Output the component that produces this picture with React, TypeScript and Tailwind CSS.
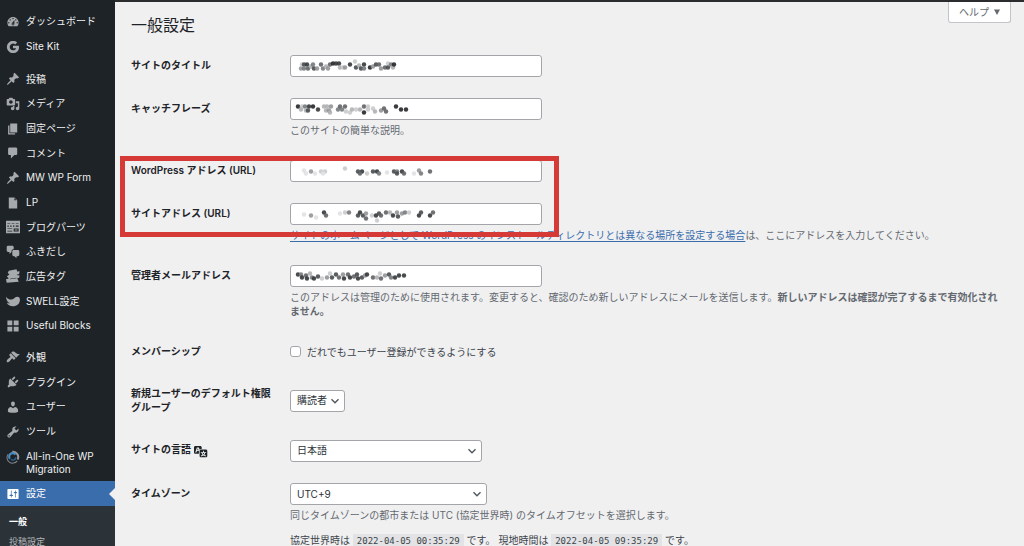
import type { ReactNode } from "react";

const ICONS: Record<string, string> = {
  dashboard:
    "M3.76 16h12.48c1.1-1.37 1.76-3.11 1.76-5 0-4.42-3.58-8-8-8s-8 3.58-8 8c0 1.89.66 3.63 1.76 5zM10 4c.55 0 1 .45 1 1s-.45 1-1 1-1-.45-1-1 .45-1 1-1zM6 6c.55 0 1 .45 1 1s-.45 1-1 1-1-.45-1-1 .45-1 1-1zm8 0c.55 0 1 .45 1 1s-.45 1-1 1-1-.45-1-1 .45-1 1-1zm-5.37 5.55L12 7v6c0 1.1-.9 2-2 2s-2-.9-2-2c0-.57.24-1.08.63-1.45zM4 10c.55 0 1 .45 1 1s-.45 1-1 1-1-.45-1-1 .45-1 1-1zm12 0c.55 0 1 .45 1 1s-.45 1-1 1-1-.45-1-1 .45-1 1-1zm-5 3c0-.55-.45-1-1-1s-1 .45-1 1 .45 1 1 1 1-.45 1-1z",
  google:
    "M18.4 8.3H10v3.6h4.500c-.5 1.800-2.200 2.900-4.400 2.900a4.800 4.800 0 1 1 3.100-8.500l2.700-2.700A8.700 8.700 0 1 0 10.100 18.700c4.900 0 8.500-3.400 8.500-8.500 0-.7-.1-1.300-.2-1.900z",
  pin: "M10.44 3.02l1.82-1.82 6.36 6.35-1.83 1.82c-1.05-.68-2.48-.57-3.41.36l-.75.75c-.92.93-1.04 2.35-.35 3.41l-1.83 1.82-2.41-2.41-2.8 2.79c-.42.42-3.38 2.71-3.8 2.29s1.86-3.39 2.28-3.81l2.79-2.79L4.1 9.36l1.83-1.82c1.05.69 2.48.57 3.4-.36l.75-.75c.93-.92 1.05-2.35.36-3.41z",
  media:
    "M13 11V4c0-.55-.45-1-1-1h-1.67L9 1H5L3.67 3H2c-.55 0-1 .45-1 1v7c0 .55.45 1 1 1h10c.55 0 1-.45 1-1zM7 4.5c1.38 0 2.5 1.12 2.5 2.5S8.38 9.5 7 9.5 4.5 8.38 4.5 7 5.62 4.5 7 4.5zM14 6h5v10.5c0 1.38-1.12 2.5-2.5 2.5S14 17.88 14 16.5s1.12-2.5 2.5-2.5c.17 0 .34.02.5.05V9h-3V6zm-4 8.05V13h2v3.5c0 1.38-1.12 2.5-2.5 2.5S7 17.88 7 16.5 8.12 14 9.5 14c.17 0 .34.02.5.05z",
  page: "M6 15V2h10v13H6zm-1 1h8v2H3V5h2v11z",
  comment: "M5 2h9c1.1 0 2 .9 2 2v7c0 1.1-.9 2-2 2h-2l-5 5v-5H5c-1.1 0-2-.9-2-2V4c0-1.1.9-2 2-2z",
  file: "M12 2l4 4v12H4V2h8zm0 4h3l-3-3v3z",
  parts:
    "M0 1h20v18H0zM2 4.500v1h4v-1zm6 0v1h4v-1zm6 0v1h4v-1zM2 8v1.500h2V8zm4 0v1.500h2V8zm4 0v1.500h2V8zm4 0v1.500h4V8zM2 12v1h7v-1zm0 3.500v1h7v-1zM11 12v4.500h7V12zm1.500 1.500h4v1.500h-4z",
  chat: "M11 6h-.82C9.07 6 8 7.2 8 8.16V10l-3 3v-3H3c-1.1 0-2-.9-2-2V3c0-1.1.9-2 2-2h6c1.1 0 2 .9 2 2v3zm0 1h6c1.1 0 2 .9 2 2v5c0 1.1-.9 2-2 2h-2v3l-3-3h-1c-1.1 0-2-.9-2-2V9c0-1.1.9-2 2-2z",
  tags: "M4 2.500l11-2 1 3.200 3.500-.5-.8 4-4 1.200 4.800.8-.8 3.400-2.700.6 2.200 5-17.200 1.300L0 14.500l4-.9-2.800-3.300 3.800-2.600-2.500-1.900zM6 14.500l9-1.200-.2-.7-9 1.200z",
  swell:
    "M0 3.500c1.500 3 4.500 4.500 7.500 4.500 3.600 0 4.800-3.700 8.300-4 2.500-.2 4.200 1.600 4.100 4.500-.2 5.400-4.500 9-9.900 9-4.400 0-7.600-2-8.900-5.500 1.600 1.100 3.200 1.500 5 1.300C2.500 12.300 0 8.800 0 3.500z",
  blocks: "M2 2h7v7H2zm9 0h7v7h-7zM2 11h7v7H2zm9 0h7v7h-7z",
  appearance:
    "M14.48 11.06L7.41 3.99l1.5-1.5c.5-.56 2.3-.47 3.51.32 1.21.8 1.43 1.28 2.91 2.1 1.18.64 2.45 1.26 4.45.85zm-.71.71L6.7 4.7 4.93 6.47c-.39.39-.39 1.02 0 1.41l1.06 1.06c.39.39.39 1.03 0 1.42-.6.6-1.43 1.11-2.21 1.69-.35.26-.7.53-1.01.84C1.43 14.23.4 16.08 1.4 17.07c.99 1 2.84-.03 4.18-1.36.31-.31.58-.66.85-1.02.57-.78 1.08-1.61 1.69-2.21.39-.39 1.02-.39 1.41 0l1.06 1.06c.39.39 1.02.39 1.41 0z",
  plugin:
    "M13.11 4.36L9.87 7.6 8 5.73l3.24-3.24c.35-.34 1.05-.2 1.56.32.52.51.66 1.21.31 1.55zm-8 1.77l.91-1.12 9.01 9.01-1.19.84c-.71.71-2.63 1.16-3.82 1.16H6.14L4.9 17.26c-.59.59-1.54.59-2.12 0-.59-.58-.59-1.53 0-2.12l1.24-1.24v-3.88c0-1.13.4-3.19 1.09-3.89zm7.26 3.97l3.24-3.24c.34-.35 1.04-.21 1.55.31.52.51.66 1.21.31 1.55l-3.24 3.25z",
  user: "M10 9.25c-2.27 0-2.73-3.44-2.73-3.44C7 4.02 7.82 2 9.97 2c2.16 0 2.98 2.02 2.71 3.81 0 0-.41 3.44-2.68 3.44zm0 2.57L12.72 10c2.39 0 4.52 2.33 4.52 4.53v2.49s-3.65 1.13-7.24 1.13c-3.65 0-7.24-1.13-7.24-1.13v-2.49c0-2.25 1.94-4.48 4.47-4.48z",
  tool: "M16.68 9.77c-1.34 1.34-3.3 1.67-4.95.99l-5.41 6.52c-.99.99-2.59.99-3.58 0s-.99-2.59 0-3.57l6.52-5.42c-.68-1.65-.35-3.61.99-4.95 1.28-1.28 3.12-1.62 4.72-1.06l-2.89 2.89 2.82 2.82 2.86-2.87c.53 1.58.18 3.39-1.08 4.65zM3.81 16.21c.4.39 1.04.39 1.43 0 .4-.4.4-1.04 0-1.43-.39-.4-1.03-.4-1.43 0-.39.39-.39 1.03 0 1.43z",
  settings:
    "M18 16V4c0-.55-.45-1-1-1H3c-.55 0-1 .45-1 1v12c0 .55.45 1 1 1h14c.55 0 1-.45 1-1zM8 11h1c.55 0 1 .45 1 1s-.45 1-1 1H8v1.5c0 .28-.22.5-.5.5s-.5-.22-.5-.5V13H6c-.55 0-1-.45-1-1s.45-1 1-1h1V5.5c0-.28.22-.5.5-.5s.5.22.5.5V11zm5-2h-1c-.55 0-1-.45-1-1s.45-1 1-1h1V5.5c0-.28.22-.5.5-.5s.5.22.5.5V7h1c.55 0 1 .45 1 1s-.45 1-1 1h-1v5.5c0 .28-.22.5-.5.5s-.5-.22-.5-.5V9z",
  translation:
    "M11 7H9.49c-.63 0-1.25.3-1.59.7L7 5H4.13l-2.39 7h1.69l.74-2H7v4H2c-1.1 0-2-.9-2-2V5c0-1.1.9-2 2-2h7c1.1 0 2 .9 2 2v2zM6.51 9H4.49l1-2.93zM10 8h7c1.1 0 2 .9 2 2v7c0 1.1-.9 2-2 2h-7c-1.1 0-2-.9-2-2v-7c0-1.1.9-2 2-2zm7.25 5v-1.08h-3.17V9.75h-1.16v2.17H9.75V13h1.28c.11.85.56 1.85 1.28 2.62-.87.36-1.89.62-2.31.62-.01.02.22.97.2 1.46.84 0 2.21-.5 3.28-1.15 1.09.65 2.48 1.15 3.34 1.15-.02-.49.2-1.44.2-1.46-.43 0-1.49-.27-2.38-.63.7-.77 1.14-1.77 1.25-2.61h1.36zm-3.81 1.93c-.5-.46-.85-1.13-1.01-1.93h2.09c-.17.8-.51 1.47-1 1.93l-.04.03s-.03-.02-.04-.03z",
};

function Icon({ name, className }: { name: string; className: string }) {
  if (name === "migration") {
    return (
      <svg viewBox="0 0 20 20" className={className} fill="none" aria-hidden="true">
        <path d="M3 6A8 8 0 0 0 16 15.500" stroke="#7d8388" strokeWidth="1.500" />
        <path d="M9 2.500a7.500 7.500 0 0 1 7.500 11" stroke="#969a9e" strokeWidth="3" />
        <path d="M5.500 12.500a5 5 0 0 1 8-6" stroke="#4a8cc0" strokeWidth="3" />
        <path d="M7 13a4 4 0 0 0 7-2.500" stroke="#2d6496" strokeWidth="2" />
      </svg>
    );
  }
  return (
    <svg viewBox="0 0 20 20" className={className} fill="currentColor" fillRule="evenodd" aria-hidden="true">
      <path d={ICONS[name]} />
    </svg>
  );
}

function MenuItem({ icon, children }: { icon: string; children: ReactNode }) {
  return (
    <li className="flex flex-1">
      <a href="#" className="flex flex-1 items-center gap-[6px] pl-[6px] leading-[13px]">
        <Icon name={icon} className="size-[14px] shrink-0 text-[#a7aaad]" />
        <span>{children}</span>
      </a>
    </li>
  );
}

function Sidebar() {
  return (
    <nav className="w-[115px] shrink-0 bg-[#1d2327] pt-[9px] text-[10px] text-[#f0f0f1]">
      <ul className="flex h-[50px] flex-col">
        <MenuItem icon="dashboard">ダッシュボード</MenuItem>
        <MenuItem icon="google">Site Kit</MenuItem>
      </ul>
      <ul className="mt-2 flex h-[271px] flex-col">
        <MenuItem icon="pin">投稿</MenuItem>
        <MenuItem icon="media">メディア</MenuItem>
        <MenuItem icon="page">固定ページ</MenuItem>
        <MenuItem icon="comment">コメント</MenuItem>
        <MenuItem icon="pin">MW WP Form</MenuItem>
        <MenuItem icon="file">LP</MenuItem>
        <MenuItem icon="parts">ブログパーツ</MenuItem>
        <MenuItem icon="chat">ふきだし</MenuItem>
        <MenuItem icon="tags">広告タグ</MenuItem>
        <MenuItem icon="swell">SWELL設定</MenuItem>
        <MenuItem icon="blocks">Useful Blocks</MenuItem>
      </ul>
      <ul className="mt-[7px] flex h-[99px] flex-col">
        <MenuItem icon="appearance">外観</MenuItem>
        <MenuItem icon="plugin">プラグイン</MenuItem>
        <MenuItem icon="user">ユーザー</MenuItem>
        <MenuItem icon="tool">ツール</MenuItem>
      </ul>
      <a href="#" className="flex gap-[6px] pt-[6px] pb-[5px] pl-[6px] leading-[13px]">
        <Icon name="migration" className="size-[14px] shrink-0" />
        <span>All-in-One WP Migration</span>
      </a>
      <a
        href="#"
        aria-current="page"
        className="flex h-[25px] items-center gap-[6px] bg-[#3a6dac] pl-[6px] text-white"
      >
        <Icon name="settings" className="size-[14px] shrink-0" />
        <span className="flex-1">設定</span>
        <svg viewBox="0 0 6 12" className="h-3 w-[6px]" aria-hidden="true">
          <path d="M6 0v12L0 6z" fill="#f0f0f1" />
        </svg>
      </a>
      <ul className="flex flex-col bg-[#2c3338] pt-[6px] pb-2 pl-[9px] text-[9px] leading-5">
        <li>
          <a href="#" className="font-bold text-white">
            一般
          </a>
        </li>
        <li>
          <a href="#" className="text-[#b5b8bb]">
            投稿設定
          </a>
        </li>
      </ul>
    </nav>
  );
}

/* Each dot is [x, y, grey level 0-9]; 0 is the darkest. */
type Dot = [number, number, number];

const MASKS: Record<string, Dot[]> = {
  title: [
    [11, 13, 5], [12, 9, 7], [14, 9, 2], [14, 13, 4], [17, 9, 1], [18, 13, 3], [21, 11, 6], [23, 9, 4], [24, 13, 2], [27, 13, 5],
    [31, 9, 3], [33, 13, 4], [36, 11, 6], [38, 13, 5], [40, 9, 3], [43, 8, 0], [46, 8, 1], [49, 8, 1], [50, 12, 6], [53, 12, 7], [55, 12, 5],
    [60, 9, 1], [65, 6, 7], [66, 12, 2], [69, 10, 6], [71, 13, 2], [74, 9, 1], [74, 13, 4], [80, 12, 0], [83, 11, 5], [86, 9, 2], [89, 9, 3],
    [91, 13, 5], [95, 12, 3], [98, 8, 7], [98, 12, 2], [101, 9, 4], [103, 12, 6], [104, 9, 0],
  ],
  tagline: [
    [8, 8, 0], [12, 8, 7], [11, 11, 6], [15, 8, 4], [16, 12, 6], [19, 8, 1], [18, 12, 2], [23, 8, 0], [28, 11, 1],
    [34, 8, 6], [37, 8, 6], [36, 12, 6], [39, 12, 5], [41, 8, 5], [40, 14, 6], [48, 11, 4], [50, 8, 3], [52, 11, 4], [55, 8, 3], [56, 13, 7],
    [60, 14, 7], [62, 11, 6], [66, 11, 7], [70, 11, 6], [74, 8, 3], [74, 14, 0], [78, 8, 7], [78, 11, 7], [83, 10, 7], [85, 13, 6],
    [91, 12, 5], [94, 10, 3], [96, 13, 3], [106, 8, 0], [111, 11, 0], [116, 11, 0],
  ],
  home: [
    [14, 10, 8], [16, 13, 8], [21, 11, 5], [25, 13, 8], [31, 11, 7], [35, 11, 7], [33, 13, 8], [55, 8, 7], [68, 11, 2], [72, 11, 1],
    [70, 13, 3], [77, 13, 7], [83, 11, 2], [87, 11, 1], [89, 13, 4], [97, 12, 8], [104, 11, 2], [107, 11, 4], [107, 13, 2], [112, 11, 1],
    [114, 13, 3], [124, 13, 8], [129, 10, 5], [131, 13, 4], [140, 11, 3],
  ],
  site: [
    [14, 11, 8], [21, 12, 5], [26, 14, 8], [34, 9, 1], [36, 12, 3], [50, 10, 8], [55, 9, 7], [59, 9, 4], [68, 12, 2], [70, 9, 1],
    [73, 12, 2], [76, 10, 5], [76, 15, 3], [82, 12, 7], [86, 12, 1], [89, 10, 2], [87, 17, 7], [91, 12, 3], [96, 9, 3], [100, 9, 6],
    [103, 12, 1], [107, 9, 5], [108, 13, 2], [112, 10, 5], [115, 9, 4], [119, 9, 7], [129, 12, 1], [131, 9, 2], [140, 12, 1], [143, 9, 3],
  ],
  email: [
    [8, 9, 1], [11, 9, 4], [12, 12, 1], [16, 10, 3], [17, 13, 1], [20, 8, 6], [22, 12, 4], [24, 13, 1], [28, 11, 2], [32, 13, 7],
    [37, 12, 5], [40, 8, 7], [42, 12, 2], [46, 9, 2], [49, 12, 3], [53, 9, 5], [54, 13, 1], [58, 9, 3], [60, 12, 1], [64, 11, 3],
    [67, 9, 2], [68, 13, 1], [72, 12, 2], [75, 10, 5], [77, 9, 1], [83, 12, 3], [87, 12, 6], [90, 8, 7], [91, 13, 3], [95, 10, 5],
    [99, 9, 2], [101, 12, 4], [105, 12, 1], [109, 10, 1], [114, 10, 1],
  ],
};

const GREYS = ["#222527", "#34373a", "#484b4e", "#5f6265", "#777a7d", "#929597", "#aeb0b2", "#c8cacb", "#e0e1e2", "#f0f0f0"];

function MaskedInput({ id, mask }: { id: string; mask: string }) {
  return (
    <div className="relative w-[252px] max-w-full">
      <input
        id={id}
        type="text"
        className="block h-[22px] w-full rounded-[3px] border border-[#a3a5a8] bg-white px-[6px]"
      />
      <svg viewBox="0 0 160 22" className="pointer-events-none absolute top-0 left-0 h-[22px] w-40" aria-hidden="true">
        {MASKS[mask].map(([x, y, level], i) => (
          <circle key={i} cx={x} cy={y + 0.5} r="2.2" fill={GREYS[level]} fillOpacity="0.9" />
        ))}
      </svg>
    </div>
  );
}

function Dropdown({ id, value, className }: { id: string; value: string; className: string }) {
  return (
    <div className={`relative ${className}`}>
      <select
        id={id}
        defaultValue={value}
        className="block h-[22px] w-full appearance-none rounded-[3px] border border-[#a3a5a8] bg-white pr-4 pl-[6px] text-[10px] text-[#2c3338]"
      >
        <option>{value}</option>
      </select>
      <svg
        viewBox="0 0 10 10"
        className="pointer-events-none absolute top-[6px] right-[5px] size-[10px]"
        fill="none"
        stroke="#50575e"
        strokeWidth="1.4"
        aria-hidden="true"
      >
        <path d="M1.500 3.200L5 6.700l3.500-3.500" />
      </svg>
    </div>
  );
}

function Row({ label, htmlFor, icon, children }: { label: string; htmlFor: string; icon?: string; children: ReactNode }) {
  return (
    <div className="flex">
      <div className="w-[159px] shrink-0 py-[14px] pr-[14px] leading-[14px] font-semibold text-[#1d2327]">
        <label htmlFor={htmlFor}>{label}</label>
        {icon && <Icon name={icon} className="ml-[3px] inline-block size-[14px] align-[-5px]" />}
      </div>
      <div className="flex min-w-0 flex-1 flex-col justify-center pt-[11px] pb-[10px]">{children}</div>
    </div>
  );
}

function Description({ children }: { children: ReactNode }) {
  return <p className="mt-[3px] mb-[2px] pr-[7px] leading-[14px] text-[#646970]">{children}</p>;
}

function Code({ children }: { children: ReactNode }) {
  return (
    <code className="bg-[#e3e3e5] px-1 py-[2px] font-['DejaVu_Sans_Mono',monospace] text-[9px]">
      {children}
    </code>
  );
}

export default function App() {
  return (
    <div
      lang="ja"
      className="flex h-screen overflow-hidden bg-[#f0f0f1] font-[Inter,'Noto_Sans_CJK_JP',sans-serif] text-[10px] text-[#3c434a]"
    >
      <Sidebar />
      <main className="min-w-0 flex-1 border-t-2 border-[#2a2c2e] pr-[13px] pl-4">
        <header className="flex h-[42px] items-start justify-between">
          <h1 className="pt-[11px] text-[16px] leading-6 text-[#1d2327]">一般設定</h1>
          <button
            type="button"
            className="flex h-[21px] items-center gap-[5px] rounded-b-[3px] border border-t-0 border-[#c3c4c7] bg-white px-[10px] text-[10px] text-[#646970]"
          >
            ヘルプ
            <svg viewBox="0 0 6 6" className="size-[6px]" fill="currentColor" aria-hidden="true">
              <path d="M0 0.500h6L3 6z" />
            </svg>
          </button>
        </header>

        <form>
          <Row label="サイトのタイトル" htmlFor="title">
            <MaskedInput id="title" mask="title" />
          </Row>
          <Row label="キャッチフレーズ" htmlFor="tagline">
            <MaskedInput id="tagline" mask="tagline" />
            <Description>このサイトの簡単な説明。</Description>
          </Row>
          <div className="relative">
            <Row label="WordPress アドレス (URL)" htmlFor="home">
              <MaskedInput id="home" mask="home" />
            </Row>
            <Row label="サイトアドレス (URL)" htmlFor="site">
              <MaskedInput id="site" mask="site" />
              <Description>
                <a href="#" className="text-[#3a6dac] underline underline-offset-2">
                  サイトのホームページとして WordPress のインストールディレクトリとは異なる場所を設定する場合
                </a>
                は、ここにアドレスを入力してください。
              </Description>
            </Row>
            <div className="pointer-events-none absolute top-[7px] -left-[11px] h-[81px] w-[439px] border-[5px] border-[#d63a37]" />
          </div>
          <Row label="管理者メールアドレス" htmlFor="email">
            <MaskedInput id="email" mask="email" />
            <Description>
              このアドレスは管理のために使用されます。変更すると、確認のため新しいアドレスにメールを送信します。
              <strong className="font-semibold">新しいアドレスは確認が完了するまで有効化されません。</strong>
            </Description>
          </Row>
          <Row label="メンバーシップ" htmlFor="membership">
            <label className="flex items-center gap-[6px] leading-[20px]">
              <input
                id="membership"
                type="checkbox"
                className="size-[11px] appearance-none rounded-[3px] border border-[#a3a5a8] bg-white"
              />
              だれでもユーザー登録ができるようにする
            </label>
          </Row>
          <Row label="新規ユーザーのデフォルト権限グループ" htmlFor="role">
            <Dropdown id="role" value="購読者" className="w-[55px]" />
          </Row>
          <Row label="サイトの言語" htmlFor="language" icon="translation">
            <Dropdown id="language" value="日本語" className="w-[192px]" />
          </Row>
          <Row label="タイムゾーン" htmlFor="timezone">
            <Dropdown id="timezone" value="UTC+9" className="w-[197px]" />
            <Description>同じタイムゾーンの都市または UTC (協定世界時) のタイムオフセットを選択します。</Description>
            <p className="mt-[9px] leading-[14px]">
              協定世界時は <Code>2022-04-05 00:35:29</Code> です。 現地時間は <Code>2022-04-05 09:35:29</Code> です。
            </p>
          </Row>
        </form>
      </main>
    </div>
  );
}
